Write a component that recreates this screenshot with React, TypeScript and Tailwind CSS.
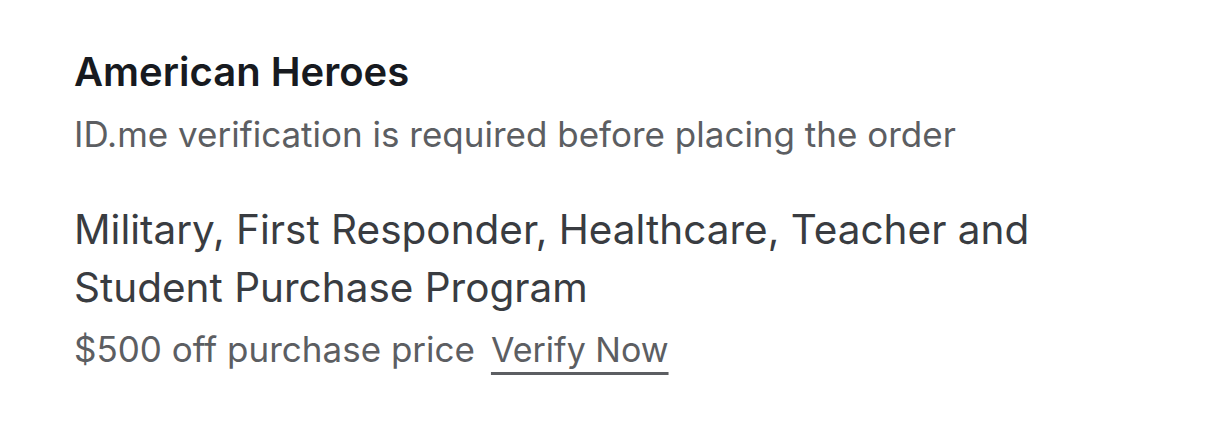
import React from "react";

const App: React.FC = () => {
  return (
    <div
      className="w-[1206px] h-[425px] bg-white px-[74px] pt-[46px]"
      style={{ fontFamily: "Inter, 'Noto Sans', sans-serif" }}
    >
      <h2 className="text-[40px] leading-[52px] font-semibold text-[#171a20]">
        American Heroes
      </h2>
      <p className="mt-[6px] text-[35px] leading-[60px] text-[#5c5e62]">
        ID.me verification is required before placing the order
      </p>
      <div className="mt-[37px] w-[1000px]">
        <p className="text-[40.5px] leading-[58px] text-[#393c41]">
          Military, First Responder, Healthcare, Teacher and Student Purchase
          Program
        </p>
        <p className="mt-[3px] text-[35px] leading-[58px] text-[#5c5e62]">
          $500 off purchase price
          <a className="ml-[16px] text-[34px] underline decoration-[3px] underline-offset-[10px] text-[#5c5e62]">
            Verify Now
          </a>
        </p>
      </div>
    </div>
  );
};

export default App;
